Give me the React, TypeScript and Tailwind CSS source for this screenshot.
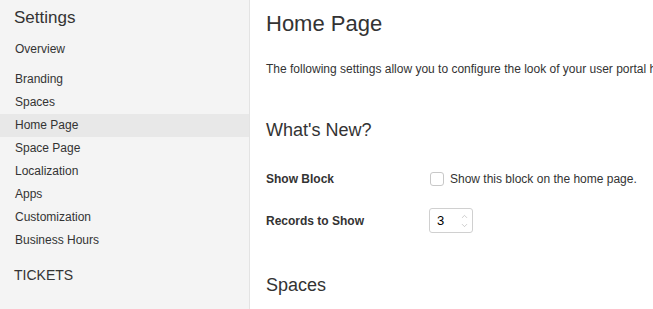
import { ChevronUp, ChevronDown } from 'lucide-react';

const navItems = ['Branding', 'Spaces', 'Home Page', 'Space Page', 'Localization', 'Apps', 'Customization', 'Business Hours'];

export default function App() {
  const active = 'Home Page';

  return (
    <div
      className="flex h-[309px] w-[653px] overflow-hidden bg-white text-[#333]"
      style={{ fontFamily: '"Liberation Sans", Arial, sans-serif' }}
    >
      {/* Sidebar */}
      <aside className="w-[250px] shrink-0 border-r border-[#e3e3e3] bg-[#f4f4f4]">
        <h2 className="pl-[14px] pt-[6px] text-[17px] leading-[24px] text-[#333]">Settings</h2>
        <div className="mt-[8px] pl-[15px] text-[12px] leading-[23px]">Overview</div>
        <nav className="mt-[7px] flex flex-col">
          {navItems.map((item) => (
            <div
              key={item}
              className={`h-[23px] pl-[15px] text-[12px] leading-[23px] ${item === active ? 'bg-[#e8e8e8]' : ''}`}
            >
              {item}
            </div>
          ))}
        </nav>
        <div className="mt-[14px] pl-[14px] text-[14px] leading-[18px]">TICKETS</div>
      </aside>

      {/* Main */}
      <main className="flex-1 overflow-hidden pl-[16px] whitespace-nowrap">
        <h1 className="pt-[9px] text-[22px] leading-[30px]">Home Page</h1>
        <p className="mt-[22px] text-[12px] leading-[16px]">
          The following settings allow you to configure the look of your user portal home page.
        </p>

        <h3 className="mt-[41px] text-[18px] leading-[24px]">What's New?</h3>

        <div className="mt-[27px] flex h-[20px] items-center">
          <div className="w-[164px] text-[12px] font-bold">Show Block</div>
          <div className="flex items-center">
            <span className="h-[14px] w-[14px] rounded-[3px] border border-[#c8c8c8] bg-white" />
            <span className="ml-[6px] text-[12px]">Show this block on the home page.</span>
          </div>
        </div>

        <div className="mt-[19px] flex items-center">
          <div className="w-[163px] text-[12px] font-bold">Records to Show</div>
          <div className="flex h-[25px] w-[44px] items-center justify-between rounded-[3px] border border-[#d0d0d0] bg-white pl-[7px] pr-[3px]">
            <span className="text-[13px] text-black">3</span>
            <div className="flex flex-col items-center text-[#aaa]">
              <ChevronUp size={9} strokeWidth={1.5} />
              <ChevronDown size={9} strokeWidth={1.5} />
            </div>
          </div>
        </div>

        <h3 className="mt-[40px] text-[18px] leading-[24px]">Spaces</h3>
      </main>
    </div>
  );
}
